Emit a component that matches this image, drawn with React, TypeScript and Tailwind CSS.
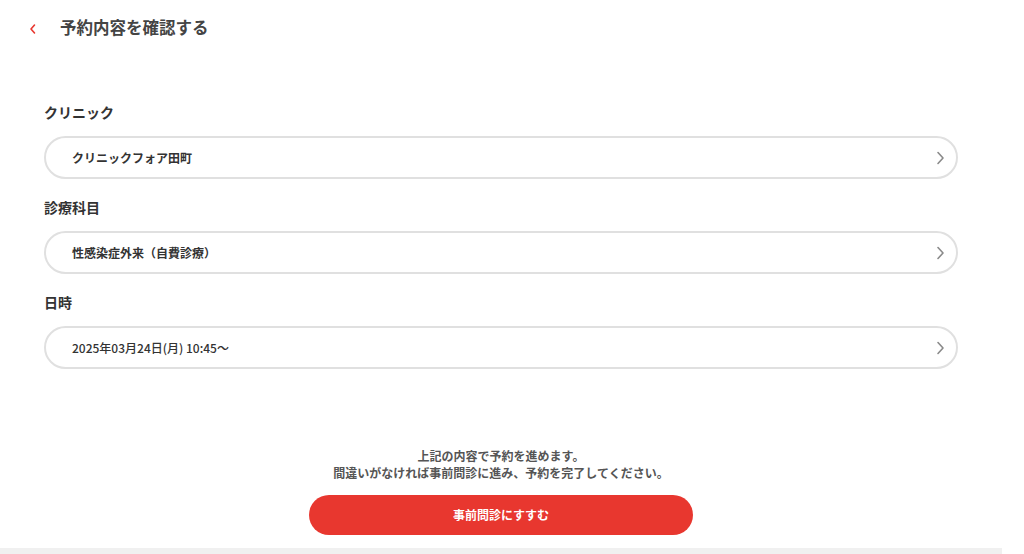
import React from "react";

const font = { fontFamily: '"Noto Sans CJK JP", "Noto Sans", sans-serif' };

function Chevron() {
  return (
    <svg width="9" height="14" viewBox="0 0 9 14" fill="none" className="shrink-0">
      <path d="M2 1.5 L7 7 L2 12.5" stroke="#8a8a8a" strokeWidth="1.6" strokeLinecap="round" strokeLinejoin="round" />
    </svg>
  );
}

function Field({ label, value, bold = true }: { label: string; value: string; bold?: boolean }) {
  return (
    <div className="flex flex-col">
      <div className="h-[22px] flex items-center text-[14px] font-bold text-[#333]">{label}</div>
      <div className="mt-[13px] h-[43px] rounded-full border-2 border-[#e0e0e0] flex items-center pl-[26px] pr-[11px]">
        <span className={`flex-1 text-[12px] text-[#333] ${bold ? "font-bold" : "font-medium"}`}>{value}</span>
        <Chevron />
      </div>
    </div>
  );
}

export default function App() {
  return (
    <div className="w-[1002px] h-[554px] bg-white flex flex-col" style={font}>
      <div className="h-[56px] flex items-center pl-[29px] pb-[1px]">
        <svg width="8" height="12" viewBox="0 0 8 12" fill="none" className="mt-[2px]">
          <path d="M5.5 2 L2 6 L5.5 10" stroke="#e8372f" strokeWidth="1.6" strokeLinecap="round" strokeLinejoin="round" />
        </svg>
        <span className="ml-[23px] text-[16.5px] font-bold text-[#444]">予約内容を確認する</span>
      </div>
      <div className="px-[44px] pt-[45px] flex flex-col gap-[17px]">
        <Field label="クリニック" value="クリニックフォア田町" />
        <Field label="診療科目" value="性感染症外来（自費診療）" />
        <Field label="日時" value="2025年03月24日(月) 10:45〜" bold={false} />
      </div>
      <div className="flex-1" />
      <div className="flex flex-col items-center text-[12px] font-bold text-[#555] leading-[17px]">
        <p>上記の内容で予約を進めます。</p>
        <p>間違いがなければ事前問診に進み、予約を完了してください。</p>
      </div>
      <div className="mt-[14px] flex justify-center">
        <button className="w-[384px] h-[40px] rounded-full bg-[#e8372f] text-white text-[12px] font-bold">
          事前問診にすすむ
        </button>
      </div>
      <div className="mt-[13px] h-[6px] bg-[#f0f0f0]" />
    </div>
  );
}
